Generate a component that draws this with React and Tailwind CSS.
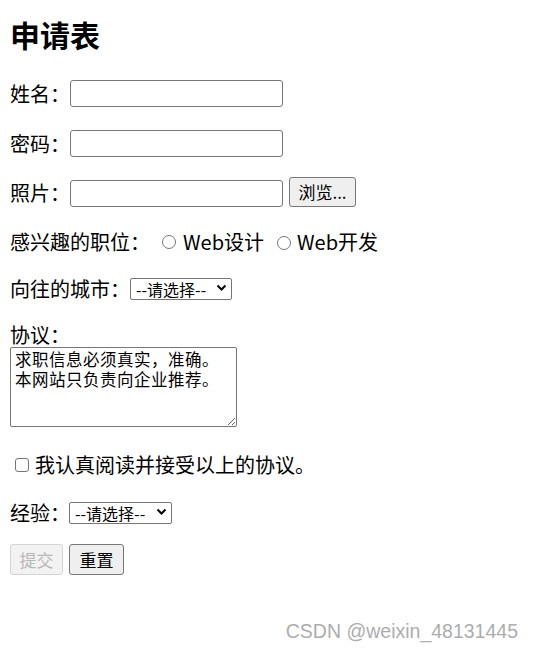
import React from 'react';

const cjk = "font-['Noto_Sans_CJK_SC','Microsoft_YaHei',sans-serif]";

const TextBox = ({ type = 'text' }) => (
  <input
    type={type}
    className="w-[213px] h-[27px] border border-[#767676] rounded-[3px] bg-white px-1 text-[16px]"
  />
);

const Select = ({ width }) => (
  <div className="relative shrink-0" style={{ width }}>
    <select className="w-full h-[22px] appearance-none border border-[#767676] rounded-[2px] bg-white pl-[5px] pr-[20px] text-[16px] leading-[20px] text-black">
      <option>--请选择--</option>
    </select>
    <svg
      className="pointer-events-none absolute right-[5px] top-[6px]"
      width="11"
      height="10"
      viewBox="0 0 11 10"
    >
      <path d="M1.5 2.5 L5.5 6.5 L9.5 2.5" fill="none" stroke="#000" strokeWidth="2" />
    </svg>
  </div>
);

const Radio = () => <span className="inline-block w-[14px] h-[14px] rounded-full border border-[#767676] bg-white" />;

const App = () => {
  return (
    <div className={`w-[533px] h-[651px] bg-white text-black ${cjk}`}>
      <div className="flex flex-col pl-[10px]">
        <h1 className="mt-[14px] h-[40px] text-[30px] font-bold leading-[40px]">申请表</h1>

        <div className="mt-[26px] flex h-[27px] items-center">
          <span className="w-[60px] shrink-0 whitespace-nowrap text-[20px] leading-[27px]">姓名：</span>
          <TextBox />
        </div>

        <div className="mt-[23px] flex h-[27px] items-center">
          <span className="w-[60px] shrink-0 whitespace-nowrap text-[20px] leading-[27px]">密码：</span>
          <TextBox type="password" />
        </div>

        <div className="mt-[20px] flex h-[30px] items-center">
          <span className="w-[60px] shrink-0 whitespace-nowrap text-[20px] leading-[27px]">照片：</span>
          <div className="mt-[3px] w-[213px] h-[27px] border border-[#767676] rounded-[3px] bg-white" />
          <button className="ml-[6px] h-[30px] w-[67px] border border-[#767676] rounded-[3px] bg-[#efefef] text-[17px] leading-[28px]">
            浏览...
          </button>
        </div>

        <div className="mt-[21px] flex h-[28px] items-center whitespace-nowrap text-[20px] leading-[28px]">
          <span className="w-[152px] shrink-0">感兴趣的职位：</span>
          <Radio />
          <span className="ml-[7px]">Web设计</span>
          <span className="ml-[13px]"><Radio /></span>
          <span className="ml-[6px]">Web开发</span>
        </div>

        <div className="mt-[19px] flex h-[28px] items-center">
          <span className="w-[120px] shrink-0 whitespace-nowrap text-[20px] leading-[28px]">向往的城市：</span>
          <Select width="102px" />
        </div>

        <div className="mt-[20px] h-[24px] text-[20px] leading-[24px]">协议：</div>
        <textarea
          className="w-[227px] h-[80px] border border-[#767676] rounded-[2px] bg-white px-[4px] py-[1px] text-[16.5px] leading-[20px] tracking-[0.5px]"
          defaultValue={'求职信息必须真实，准确。\n本网站只负责向企业推荐。'}
        />

        <div className="mt-[24px] flex h-[28px] items-center whitespace-nowrap text-[20px] leading-[28px]">
          <span className="ml-[5px] inline-block w-[14px] h-[14px] shrink-0 rounded-[3px] border border-[#767676] bg-white" />
          <span className="ml-[6px]">我认真阅读并接受以上的协议。</span>
        </div>

        <div className="mt-[20px] flex h-[28px] items-center">
          <span className="w-[59px] shrink-0 whitespace-nowrap text-[20px] leading-[28px]">经验：</span>
          <Select width="103px" />
        </div>

        <div className="mt-[17px] flex h-[31px] items-center gap-[6px]">
          <button
            disabled
            className="h-[31px] w-[53px] border border-[#d4d4d4] rounded-[3px] bg-[#f2f2f2] text-[17px] leading-[29px] text-[#b8b8b8]"
          >
            提交
          </button>
          <button className="h-[31px] w-[55px] border border-[#767676] rounded-[3px] bg-[#efefef] text-[17px] leading-[29px]">
            重置
          </button>
        </div>

        <div className="mt-[44px] flex justify-end pr-[15px]">
          <span className="font-['Liberation_Sans',Arial,sans-serif] text-[19.5px] leading-[24px] text-[#adadad]">
            CSDN @weixin_48131445
          </span>
        </div>
      </div>
    </div>
  );
};

export default App;
